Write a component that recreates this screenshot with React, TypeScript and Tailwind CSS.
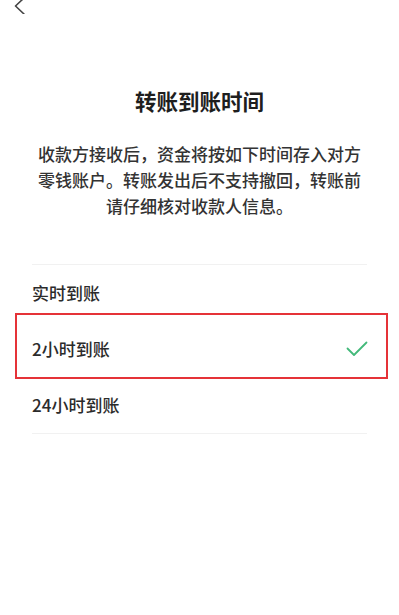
import React from 'react';

const options = ['实时到账', '2小时到账', '24小时到账'];

const App: React.FC = () => {
  const selected = 1;

  return (
    <div
      className="w-full h-[615px] bg-white overflow-hidden"
      style={{ fontFamily: '"Noto Sans CJK SC", "Noto Sans", sans-serif' }}
    >
      {/* Back button */}
      <div className="h-[14px] pl-[14px] overflow-hidden">
        <svg width="12" height="18" viewBox="0 0 12 18" className="-mt-[3px]" fill="none">
          <path d="M10 1 L1.5 9 L10 17" stroke="#444" strokeWidth="1.6" strokeLinecap="round" strokeLinejoin="round" />
        </svg>
      </div>

      {/* Title */}
      <h1 className="mt-[73px] text-center text-[21.5px] leading-[28px] font-semibold text-[#1e1e1e]">
        转账到账时间
      </h1>

      {/* Description */}
      <p className="mt-[26px] text-center text-[17px] leading-[26px] font-medium text-[#333] whitespace-nowrap">
        收款方接收后，资金将按如下时间存入对方
        <br />
        零钱账户。转账发出后不支持撤回，转账前
        <br />
        请仔细核对收款人信息。
      </p>

      {/* Options */}
      <div className="mt-[45px] mx-8 border-t border-b border-[#f1f1f1]">
        {options.map((label, i) => (
          <div key={label} className="relative h-[56px] flex items-center justify-between">
            <span className="text-[17px] font-medium text-[#2b2b2b]">{label}</span>
            {i === selected && (
              <>
                <svg width="22" height="16" viewBox="0 0 22 16" fill="none" className="-mr-[1px]">
                  <path d="M1.5 7.5 L8 14 L20.5 1.5" stroke="#43b97a" strokeWidth="1.8" strokeLinecap="round" strokeLinejoin="round" />
                </svg>
                {/* annotation highlight */}
                <div className="absolute -left-[17px] -right-[21px] -top-[8px] -bottom-[2px] border-[2.5px] border-[#e53238] pointer-events-none" />
              </>
            )}
          </div>
        ))}
      </div>
    </div>
  );
};

export default App;
